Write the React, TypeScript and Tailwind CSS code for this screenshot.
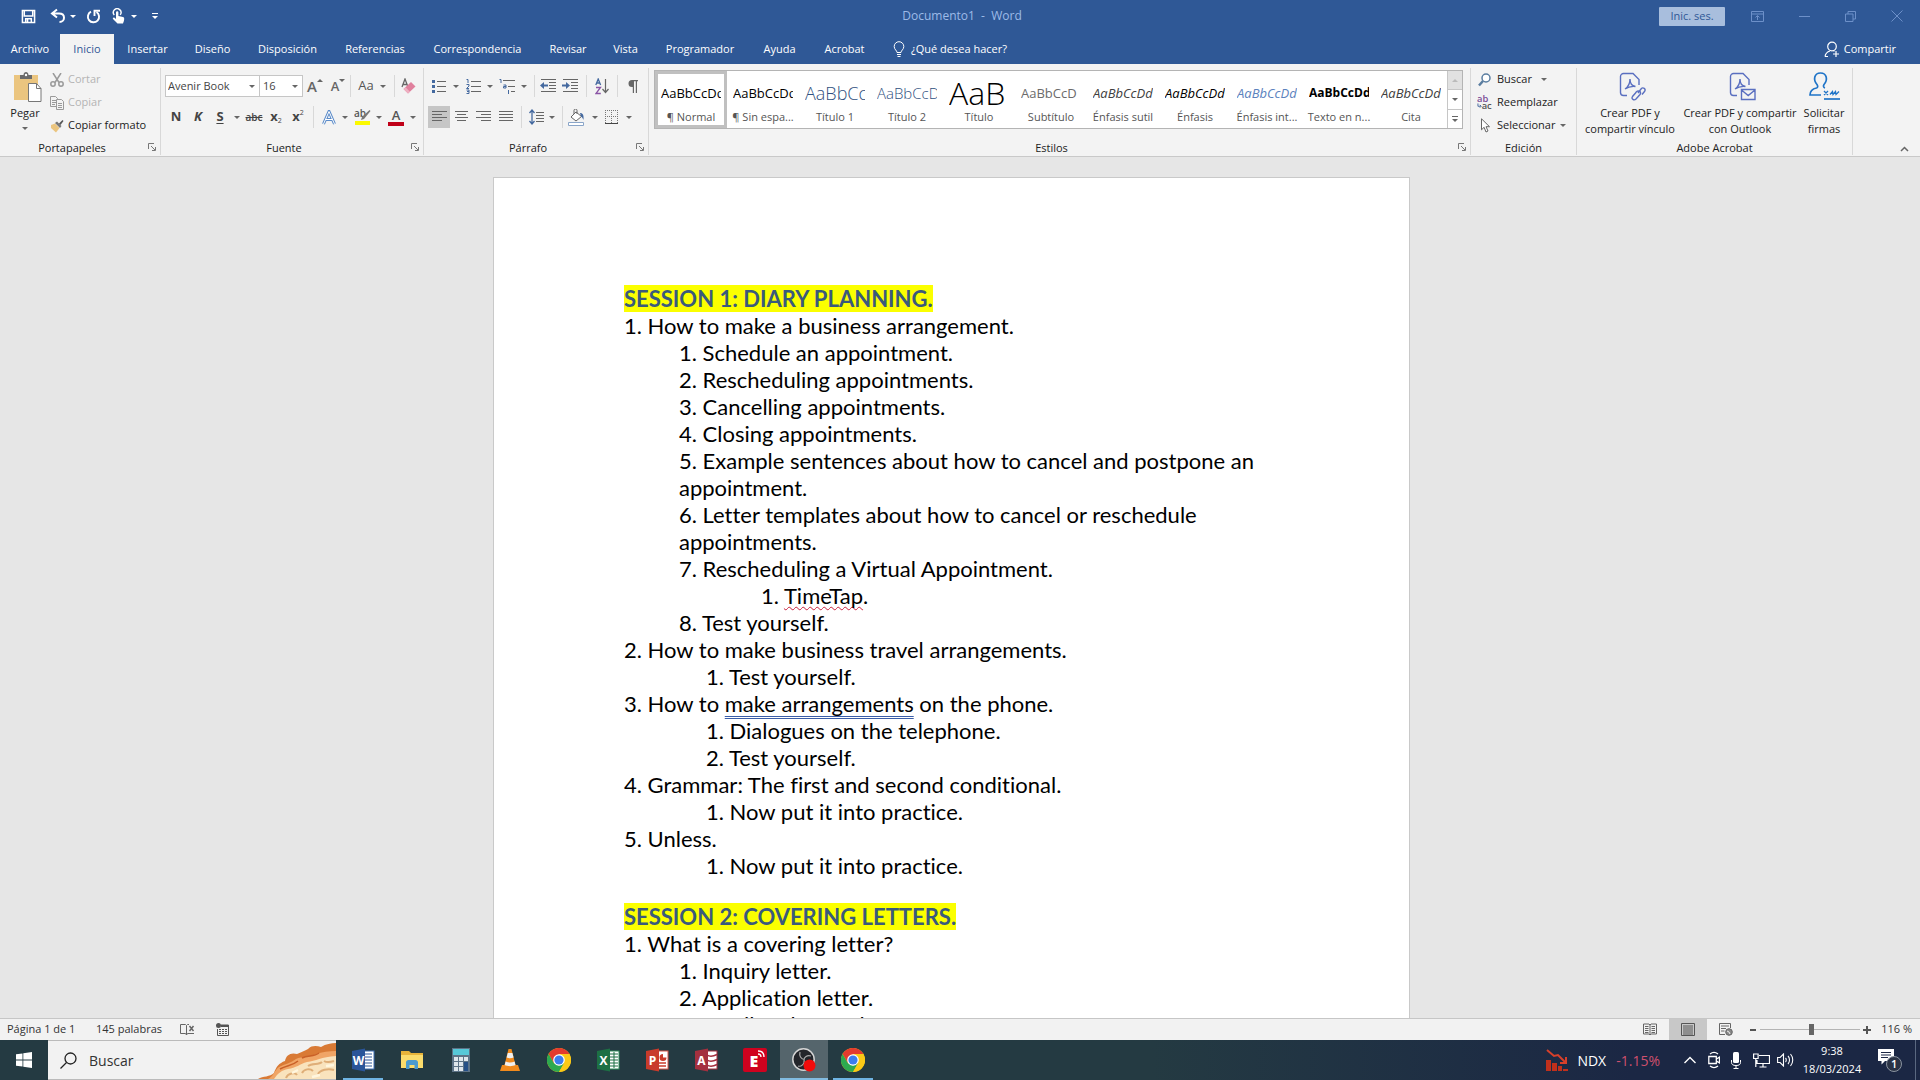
import { useState } from 'react'
import type { ReactNode } from 'react'

const tabs = [
  { label: 'Archivo', width: 'w-[60px]' },
  { label: 'Inicio', width: 'w-[54px]' },
  { label: 'Insertar', width: 'w-[67px]' },
  { label: 'Diseño', width: 'w-[63px]' },
  { label: 'Disposición', width: 'w-[87px]' },
  { label: 'Referencias', width: 'w-[88px]' },
  { label: 'Correspondencia', width: 'w-[117px]' },
  { label: 'Revisar', width: 'w-[64px]' },
  { label: 'Vista', width: 'w-[51px]' },
  { label: 'Programador', width: 'w-[98px]' },
  { label: 'Ayuda', width: 'w-[61px]' },
  { label: 'Acrobat', width: 'w-[69px]' },
]

const styles = [
  { name: '¶ Normal', sample: 'AaBbCcDd', look: 'text-[13px] text-black' },
  { name: '¶ Sin espa...', sample: 'AaBbCcDd', look: 'text-[13px] text-black' },
  { name: 'Título 1', sample: 'AaBbCc', look: 'text-[18px] font-light text-[#2f5080]' },
  { name: 'Título 2', sample: 'AaBbCcD', look: 'text-[15px] font-light text-[#2f5080]' },
  { name: 'Título', sample: 'AaB', look: 'text-[32px] font-light text-black' },
  { name: 'Subtítulo', sample: 'AaBbCcD', look: 'text-[13px] text-[#6b6b6b]' },
  { name: 'Énfasis sutil', sample: 'AaBbCcDd', look: 'text-[13px] italic text-[#404040]' },
  { name: 'Énfasis', sample: 'AaBbCcDd', look: 'text-[13px] italic text-black' },
  { name: 'Énfasis int...', sample: 'AaBbCcDd', look: 'text-[13px] italic text-[#5b82bd]' },
  { name: 'Texto en n...', sample: 'AaBbCcDd', look: 'text-[12px] font-bold text-black' },
  { name: 'Cita', sample: 'AaBbCcDd', look: 'text-[13px] italic text-[#404040]' },
]

const indents = ['pl-0', 'pl-[55px]', 'pl-[82px]', 'pl-[137px]']

const sessionOne: { level: number; text: ReactNode }[] = [
  { level: 0, text: '1. How to make a business arrangement.' },
  { level: 1, text: '1. Schedule an appointment.' },
  { level: 1, text: '2. Rescheduling appointments.' },
  { level: 1, text: '3. Cancelling appointments.' },
  { level: 1, text: '4. Closing appointments.' },
  { level: 1, text: '5. Example sentences about how to cancel and postpone an appointment.' },
  { level: 1, text: '6. Letter templates about how to cancel or reschedule appointments.' },
  { level: 1, text: '7. Rescheduling a Virtual Appointment.' },
  {
    level: 3,
    text: (
      <>
        1. <span className="underline decoration-[#c8203c] decoration-wavy decoration-1 underline-offset-2 [text-decoration-skip-ink:none]">TimeTap</span>.
      </>
    ),
  },
  { level: 1, text: '8. Test yourself.' },
  { level: 0, text: '2. How to make business travel arrangements.' },
  { level: 2, text: '1. Test yourself.' },
  {
    level: 0,
    text: (
      <>
        3. How to{' '}
        <span className="underline decoration-[#3a5da8] decoration-double decoration-1 underline-offset-4 [text-decoration-skip-ink:none]">
          make arrangements
        </span>{' '}
        on the phone.
      </>
    ),
  },
  { level: 2, text: '1. Dialogues on the telephone.' },
  { level: 2, text: '2. Test yourself.' },
  { level: 0, text: '4. Grammar: The first and second conditional.' },
  { level: 2, text: '1. Now put it into practice.' },
  { level: 0, text: '5. Unless.' },
  { level: 2, text: '1. Now put it into practice.' },
]

const sessionTwo: { level: number; text: ReactNode }[] = [
  { level: 0, text: '1. What is a covering letter?' },
  { level: 1, text: '1. Inquiry letter.' },
  { level: 1, text: '2. Application letter.' },
  { level: 1, text: '3. Email and cover letter.' },
]

function Arrow({ className = 'text-[#666]' }: { className?: string }) {
  return (
    <svg className={`h-[3px] w-[6px] shrink-0 ${className}`} viewBox="0 0 6 3" fill="currentColor">
      <path d="M0 0h6L3 3z" />
    </svg>
  )
}

function Sep({ className = '' }: { className?: string }) {
  return <span className={`h-[22px] w-px shrink-0 bg-[#d8d8d8] ${className}`} />
}

function Tool({ label, width, active, children }: { label: string; width: string; active?: boolean; children: ReactNode }) {
  return (
    <button
      type="button"
      aria-label={label}
      className={`flex h-[22px] shrink-0 items-center justify-center ${width} ${active ? 'bg-[#c6c6c6]' : 'hover:bg-[#dcdcdc]'}`}
    >
      {children}
    </button>
  )
}

function Drop({ label }: { label: string }) {
  return (
    <button type="button" aria-label={label} className="flex h-[22px] w-3 shrink-0 items-center justify-center">
      <Arrow />
    </button>
  )
}

function Group({ title, className, launcher, children }: { title: string; className: string; launcher?: boolean; children: ReactNode }) {
  return (
    <section className={`relative flex flex-col border-r border-[#d8d8d8] ${className}`}>
      <div className="flex-1">{children}</div>
      <h2 className={`text-center text-[11px] leading-[15px] text-[#222] ${launcher ? 'pr-4' : ''}`}>{title}</h2>
      {launcher && (
        <button type="button" aria-label={`Más opciones de ${title}`} className="absolute right-1 bottom-1 text-[#777]">
          <svg width="8" height="8" viewBox="0 0 8 8" fill="none" stroke="currentColor">
            <path d="M.5 6V.5H6M3 3l4 4M7.500 4v3.500H4" />
          </svg>
        </button>
      )}
    </section>
  )
}

// horizontal strokes shared by the alignment icons
function Lines({ rows }: { rows: [number, number][] }) {
  return (
    <svg className="text-[#666]" width="15" height="14" viewBox="0 0 15 14" fill="currentColor">
      {rows.map(([x, w], i) => (
        <rect key={i} x={x} y={i * 3 + 1} width={w} height="1" />
      ))}
    </svg>
  )
}

function TitleBar() {
  return (
    <header className="flex h-[34px] items-center bg-[#2f5896] pb-[2px] text-white">
      <div className="flex flex-1 items-center pl-[21px]">
        <button type="button" aria-label="Guardar" className="mr-[14px]">
          <svg width="15" height="15" viewBox="0 0 16 16" fill="none" stroke="currentColor" strokeWidth="1.600">
            <path d="M1.500 1.500h13v13h-13zM3.500 2v5.500h9V2" />
            <path d="M5 14.500v-4h6v4M7 11v3" />
          </svg>
        </button>
        <button type="button" aria-label="Deshacer" className="mr-[4px]">
          <svg width="16" height="16" viewBox="0 0 16 16" fill="none" stroke="currentColor" strokeWidth="2">
            <path d="M7 1.500L2 5.500l5 4M2.500 5.500H9c3.500 0 5 2 5 4.200S12.500 14 9.500 14" />
          </svg>
        </button>
        <Arrow className="mr-[10px] text-white" />
        <button type="button" aria-label="Rehacer" className="mr-[11px]">
          <svg width="15" height="15" viewBox="0 0 15 15" fill="none" stroke="currentColor" strokeWidth="1.900">
            <path d="M5 2.700a5.600 5.600 0 1 0 5.500.3" />
            <path d="M8.500 7V1.700H14" />
          </svg>
        </button>
        <button type="button" aria-label="Modo mouse/toque" className="mr-[6px]">
          <svg width="13" height="16" viewBox="0 0 13 16" fill="currentColor">
            <path d="M4 4.500a1.200 1.200 0 0 1 2.400 0V8l4.600 1c.8.2 1.200.7 1.200 1.500 0 2-.6 3.500-1.200 5H5.500L1 11c-.6-.9.5-1.900 1.500-1.200L4 11z" />
            <path d="M2.300 7A3.800 3.800 0 1 1 8.200 6.800" fill="none" stroke="currentColor" strokeWidth="1.400" />
          </svg>
        </button>
        <Arrow className="mr-[15px] text-white" />
        <button type="button" aria-label="Personalizar barra" className="flex flex-col items-center gap-[2px]">
          <span className="h-px w-[6px] bg-white" />
          <Arrow className="text-white" />
        </button>
      </div>
      <h1 className="text-[12px] whitespace-pre text-[#9dbbe8]">Documento1  -  Word</h1>
      <div className="flex flex-1 items-center justify-end pr-[17px] text-[#6d90c9]">
        <button type="button" className="mr-[26px] h-[19px] w-[66px] rounded-[1px] bg-[#a8bedd] text-[11px] text-[#2f5896]">
          Inic. ses.
        </button>
        <button type="button" aria-label="Opciones de la cinta" className="mr-[35px]">
          <svg width="13" height="11" viewBox="0 0 13 11" fill="none" stroke="currentColor">
            <path d="M.5.5h12v10H.5zM.5 3h12M6.500 9V5M4.500 6.500l2-2 2 2" />
          </svg>
        </button>
        <button type="button" aria-label="Minimizar" className="mr-[35px]">
          <svg width="11" height="11" viewBox="0 0 11 11" stroke="currentColor"><path d="M0 5.500h11" /></svg>
        </button>
        <button type="button" aria-label="Restaurar" className="mr-[35px]">
          <svg width="11" height="11" viewBox="0 0 11 11" fill="none" stroke="currentColor">
            <path d="M.5 3h7.500v7.500H.5zM3 3V.5h7.500V8H8" />
          </svg>
        </button>
        <button type="button" aria-label="Cerrar">
          <svg width="12" height="12" viewBox="0 0 12 12" stroke="currentColor"><path d="M.5.5l11 11M11.500.5l-11 11" /></svg>
        </button>
      </div>
    </header>
  )
}

function TabBar({ current, onSelect }: { current: string; onSelect: (tab: string) => void }) {
  return (
    <nav className="flex h-[30px] items-center bg-[#2f5896] text-[11px] text-white">
      {tabs.map((tab) => (
        <button
          key={tab.label}
          type="button"
          onClick={() => onSelect(tab.label)}
          className={`h-[30px] shrink-0 whitespace-nowrap ${tab.width} ${tab.label === current ? 'bg-[#f3f3f3] text-[#2f5896]' : ''}`}
        >
          {tab.label}
        </button>
      ))}
      <button type="button" className="ml-[14px] flex items-center gap-[6px] whitespace-nowrap">
        <svg width="12" height="17" viewBox="0 0 12 17" fill="none" stroke="currentColor">
          <path d="M4 11.500c0-2-2.800-3-2.800-6a4.800 4.800 0 0 1 9.600 0c0 3-2.800 4-2.800 6zM4 13.500h4M4.500 15.500h3" />
        </svg>
        ¿Qué desea hacer?
      </button>
      <button type="button" className="mr-6 ml-auto flex items-center gap-1">
        <svg width="16" height="17" viewBox="0 0 16 17" fill="none" stroke="currentColor" strokeWidth="1.200">
          <circle cx="8" cy="5.500" r="4.300" />
          <path d="M1 15.500c.5-3 2.500-4.800 5-5.500M1 15.500h3M9.500 9.700l1 .6M12 10v6M9 13h6" />
        </svg>
        Compartir
      </button>
    </nav>
  )
}

function Clipboard() {
  return (
    <Group title="Portapapeles" className="w-[161px]" launcher>
      <div className="flex">
        <button type="button" className="flex w-[50px] flex-col items-center pt-1 text-[11px] leading-4 text-[#222]">
          <svg className="ml-1" width="29" height="31" viewBox="0 0 29 31">
            <path d="M1 3h24v25H1z" fill="#ebc57f" />
            <path d="M7 3h3.500c0-4 5-4 5 0H19v4H7z" fill="#6b6b6b" />
            <circle cx="13" cy="3" r="1.200" fill="#fff" />
            <path d="M15.500 11.500h8l4.500 5v13H15.500z" fill="#fff" stroke="#777" />
            <path d="M23.500 11.500v5h4.500" fill="none" stroke="#777" />
          </svg>
          <span className="mt-[2px]">Pegar</span>
          <Arrow className="mt-[6px] text-[#666]" />
        </button>
        <div className="flex flex-col text-[11px] text-[#222]">
          <button type="button" disabled className="flex h-[23px] items-center gap-1 text-[#b4b4b4]">
            <svg width="14" height="14" viewBox="0 0 14 14" fill="none" stroke="#9a9a9a" strokeWidth="1.500">
              <path d="M3 0l6 9.500M11 0L5 9.500" />
              <circle cx="3" cy="11" r="2.200" />
              <circle cx="11" cy="11" r="2.200" />
            </svg>
            Cortar
          </button>
          <button type="button" disabled className="flex h-[23px] items-center gap-1 text-[#b4b4b4]">
            <svg width="14" height="14" viewBox="0 0 14 14" fill="#f3f3f3" stroke="#9a9a9a">
              <path d="M.5.5h5l2 2v8h-7zM2 4.500h4M2 6.500h4M2 8.500h3" />
              <path d="M6.500 3.500h5l2 2v8h-7zM8 7.500h4M8 9.500h4M8 11.500h4" />
            </svg>
            Copiar
          </button>
          <button type="button" className="flex h-[23px] items-center gap-1 whitespace-nowrap">
            <svg width="14" height="14" viewBox="0 0 14 14">
              <path d="M1 6l4-1.500L9.500 9 6 13.500 1 9z" fill="#ebc57f" />
              <path d="M5 4l2-1.500 4.500 4.500L10 9z" fill="#777" />
              <path d="M9 4.500L12.500 1l1 1L10.500 6z" fill="#555" />
            </svg>
            Copiar formato
          </button>
        </div>
      </div>
    </Group>
  )
}

function FontGroup() {
  return (
    <Group title="Fuente" className="w-[263px]" launcher>
      <div className="flex flex-col gap-[9px] pt-[7px] pl-1">
        <div className="flex h-[22px] items-center">
          <div className="relative flex">
            <select aria-label="Fuente" className="h-[22px] w-[95px] appearance-none border border-[#c6c6c6] bg-white pl-[2px] text-[11px] text-[#444]">
              <option>Avenir Book</option>
            </select>
            <Arrow className="pointer-events-none absolute top-[10px] right-[5px] text-[#666]" />
          </div>
          <div className="relative flex">
            <select aria-label="Tamaño de fuente" className="h-[22px] w-[43px] appearance-none border border-l-0 border-[#c6c6c6] bg-white pl-[3px] text-[11px] text-[#444]">
              <option>16</option>
            </select>
            <Arrow className="pointer-events-none absolute top-[10px] right-[5px] text-[#666]" />
          </div>
          <Tool label="Aumentar tamaño" width="w-6">
            <span className="text-[15px] leading-4 font-semibold text-[#666]">A</span>
            <Arrow className="mb-3 rotate-180 text-[#666]" />
          </Tool>
          <Tool label="Reducir tamaño" width="w-[22px]">
            <span className="text-[13px] leading-4 font-semibold text-[#666]">A</span>
            <Arrow className="mb-3 text-[#666]" />
          </Tool>
          <Sep className="mr-1 ml-px" />
          <Tool label="Mayúsculas y minúsculas" width="w-[22px]">
            <span className="text-[13px] text-[#555]">Aa</span>
          </Tool>
          <Drop label="Opciones de mayúsculas" />
          <Sep className="mr-px ml-[5px]" />
          <Tool label="Borrar formato" width="w-6">
            <svg width="15" height="17" viewBox="0 0 15 17">
              <path d="M1 9l3-8 3 8M2 6.500h4" fill="none" stroke="#666" strokeWidth="1.300" />
              <path d="M2.500 11L10 4l4.500 4.500L7 15.500z" fill="#e0809d" />
              <path d="M2.500 11l2-1.800 4.500 4.500-2 1.800z" fill="#eeb0c2" />
            </svg>
          </Tool>
        </div>
        <div className="flex items-center text-[#444]">
          <Tool label="Negrita" width="w-[22px]"><span className="text-[13px] font-bold">N</span></Tool>
          <Tool label="Cursiva" width="w-[22px]"><span className="text-[13px] font-bold italic">K</span></Tool>
          <Tool label="Subrayado" width="w-[22px]"><span className="text-[13px] font-bold underline underline-offset-2">S</span></Tool>
          <Drop label="Tipo de subrayado" />
          <Tool label="Tachado" width="w-[22px]"><span className="text-[10px] font-semibold line-through">abc</span></Tool>
          <Tool label="Subíndice" width="w-[22px]">
            <span className="text-[13px] font-bold">x</span>
            <span className="mt-2 text-[7px]">2</span>
          </Tool>
          <Tool label="Superíndice" width="w-[22px]">
            <span className="text-[13px] font-bold">x</span>
            <span className="mb-2 text-[7px]">2</span>
          </Tool>
          <Sep className="mx-1" />
          <Tool label="Efectos de texto" width="w-[21px]">
            <svg width="14" height="15" viewBox="0 0 14 15" fill="none">
              <path d="M1.500 14L7 1.500 12.500 14M3.500 9.500h7" stroke="#5b8bc9" strokeWidth="3" />
              <path d="M1.500 14L7 1.500 12.500 14M3.500 9.500h7" stroke="#fff" strokeWidth="1" />
            </svg>
          </Tool>
          <Drop label="Opciones de efectos" />
          <Tool label="Resaltado" width="w-[22px]">
            <svg width="17" height="18" viewBox="0 0 17 18">
              <text x="0" y="9" fontSize="10" fontWeight="600" fill="#555" fontFamily="Open Sans, sans-serif">ab</text>
              <path d="M15.500 2l1 1L10 11l-3 1 1-3z" fill="#777" />
              <rect x="1" y="13" width="15" height="4" fill="#fbf900" />
            </svg>
          </Tool>
          <Drop label="Color de resaltado" />
          <Tool label="Color de fuente" width="w-[22px]">
            <span className="flex w-4 flex-col items-center border-b-4 border-[#c00018] text-[13px] leading-[13px] font-semibold text-[#555]">A</span>
          </Tool>
          <Drop label="Opciones de color" />
        </div>
      </div>
    </Group>
  )
}

function ParagraphGroup() {
  return (
    <Group title="Párrafo" className="w-[225px]" launcher>
      <div className="flex flex-col gap-[9px] pt-[7px] pl-1">
        <div className="flex items-center">
          <Tool label="Viñetas" width="w-[22px]">
            <svg width="14" height="15" viewBox="0 0 14 15" fill="#666">
              <path d="M5 2h9v1H5zM5 7h9v1H5zM5 12h9v1H5z" />
              <path d="M0 1h3v3H0zM0 6h3v3H0zM0 11h3v3H0z" fill="#44699f" />
            </svg>
          </Tool>
          <Drop label="Biblioteca de viñetas" />
          <Tool label="Numeración" width="w-[22px]">
            <svg width="15" height="17" viewBox="0 0 15 17" fill="#666">
              <path d="M5 3h10v1H5zM5 8h10v1H5zM5 13h10v1H5z" />
              <path d="M.5 1.500H2V5M.5 6.500H3v1.500L.5 10.500H3M.5 12H3v3.500H.5M1 13.500h2" fill="none" stroke="#44699f" />
            </svg>
          </Tool>
          <Drop label="Biblioteca de numeración" />
          <Tool label="Lista multinivel" width="w-[22px]">
            <svg width="16" height="17" viewBox="0 0 16 17" fill="#666">
              <path d="M4 2h12v1H4zM9 8h7v1H9zM12 13h4v1h-4z" />
              <path d="M.5 1.500H2V5M4.500 7H7v3H4.500V8.500H7M9.500 12v4" fill="none" stroke="#44699f" />
            </svg>
          </Tool>
          <Drop label="Niveles de lista" />
          <Sep className="mr-[2px] ml-1" />
          <Tool label="Disminuir sangría" width="w-[22px]">
            <svg width="16" height="14" viewBox="0 0 16 14" fill="#666">
              <path d="M1 0h15v1H1zM9 3h7v1H9zM9 6h7v1H9zM9 9h7v1H9zM1 12h15v1H1z" />
              <path d="M4 3L0 6.500 4 10V7.500h4v-2H4z" fill="#44699f" />
            </svg>
          </Tool>
          <Tool label="Aumentar sangría" width="w-[22px]">
            <svg width="16" height="14" viewBox="0 0 16 14" fill="#666">
              <path d="M1 0h15v1H1zM9 3h7v1H9zM9 6h7v1H9zM9 9h7v1H9zM1 12h15v1H1z" />
              <path d="M4 3l4 3.500L4 10V7.500H0v-2h4z" fill="#44699f" />
            </svg>
          </Tool>
          <Sep className="mr-1 ml-[5px]" />
          <Tool label="Ordenar" width="w-[22px]">
            <svg width="14" height="17" viewBox="0 0 14 17" fill="none">
              <path d="M.8 7l2.400-6 2.400 6M1.500 5h3.500" stroke="#44699f" strokeWidth="1.300" />
              <path d="M1 9.500h4.500L1 15.500h4.800" stroke="#8a55a5" strokeWidth="1.300" />
              <path d="M10.500 1v13M7.500 11l3 3.500 3-3.500" stroke="#666" strokeWidth="1.200" />
            </svg>
          </Tool>
          <Sep className="mx-1" />
          <Tool label="Mostrar todo" width="w-[22px]">
            <svg width="10" height="13" viewBox="0 0 10 13" fill="#666">
              <path d="M4 0h6v1.200H9V13H7.800V1.200H6V13H4.800V7H4a3.500 3.500 0 0 1 0-7z" />
            </svg>
          </Tool>
        </div>
        <div className="flex items-center">
          <Tool label="Alinear a la izquierda" width="w-[22px]" active><Lines rows={[[0, 15], [0, 10], [0, 15], [0, 10]]} /></Tool>
          <Tool label="Centrar" width="w-[22px]"><Lines rows={[[1, 13], [3, 9], [1, 13], [3, 9]]} /></Tool>
          <Tool label="Alinear a la derecha" width="w-[22px]"><Lines rows={[[0, 15], [5, 10], [0, 15], [5, 10]]} /></Tool>
          <Tool label="Justificar" width="w-[22px]"><Lines rows={[[1, 14], [1, 14], [1, 14], [1, 14]]} /></Tool>
          <Sep className="mr-1 ml-[5px]" />
          <Tool label="Interlineado" width="w-[20px]">
            <svg width="15" height="16" viewBox="0 0 15 16" fill="#666">
              <path d="M7 3h8v1H7zM7 6h8v1H7zM7 9h8v1H7zM7 12h8v1H7z" />
              <path d="M3 1v14M.5 4L3 1l2.500 3M.5 12L3 15l2.500-3" fill="none" stroke="#44699f" strokeWidth="1.300" />
            </svg>
          </Tool>
          <Drop label="Opciones de interlineado" />
          <Sep className="ml-1" />
          <Tool label="Sombreado" width="w-[26px]">
            <svg width="17" height="17" viewBox="0 0 17 17" fill="none">
              <path d="M3 8l5-5 5.500 4.500L8 12z" fill="#fff" stroke="#666" />
              <path d="M6 5V1.500a1.500 1.500 0 0 1 3 0V5" stroke="#666" />
              <path d="M12 4c3 0 4 2.500 3.500 7-.8-2-1.500-3-2.500-3.500z" fill="#44699f" />
              <path d="M.5 13.500h15v3H.5z" fill="#fff" stroke="#8aa5c8" />
            </svg>
          </Tool>
          <Drop label="Color de sombreado" />
          <Tool label="Bordes" width="w-[22px]">
            <svg width="14" height="14" viewBox="0 0 14 14" fill="none" stroke="#777">
              <path d="M.5 0v13M6.500 0v13M12.500 0v13M0 .5h13M0 6.500h13" strokeDasharray="1 1" />
              <path d="M0 13.500h13" stroke="#444" />
            </svg>
          </Tool>
          <Drop label="Opciones de bordes" />
        </div>
      </div>
    </Group>
  )
}

function StylesGroup() {
  const [selected, setSelected] = useState(0)
  return (
    <Group title="Estilos" className="min-w-0 flex-1" launcher>
      <div className="mt-[2px] mr-[7px] ml-[5px] flex h-[59px] border border-[#b4b4b4] bg-white">
        <div className="flex min-w-0 flex-1 overflow-hidden">
          {styles.map((style, i) => (
            <button
              key={style.name}
              type="button"
              onClick={() => setSelected(i)}
              className={`flex h-[57px] w-[72px] shrink-0 flex-col items-center border-[3px] ${i === selected ? 'border-[#c0c0c0]' : 'border-transparent'}`}
            >
              <span className={`flex h-[35px] w-[60px] items-end overflow-hidden pb-[6px] leading-5 whitespace-nowrap ${style.look}`}>{style.sample}</span>
              <span className="text-[11px] leading-4 whitespace-nowrap text-[#555]">{style.name}</span>
            </button>
          ))}
        </div>
        <div className="flex w-[15px] flex-col divide-y divide-[#c6c6c6] border-l border-[#c6c6c6]">
          <button type="button" aria-label="Fila anterior" className="flex flex-1 items-center justify-center bg-[#e1e1e1]"><Arrow className="rotate-180 text-[#bbb]" /></button>
          <button type="button" aria-label="Fila siguiente" className="flex flex-1 items-center justify-center"><Arrow /></button>
          <button type="button" aria-label="Más estilos" className="flex flex-1 flex-col items-center justify-center gap-[2px]">
            <span className="h-px w-[6px] bg-[#666]" />
            <Arrow />
          </button>
        </div>
      </div>
    </Group>
  )
}

function EditGroup() {
  return (
    <Group title="Edición" className="w-[106px]">
      <div className="flex flex-col pl-[6px] text-[11px] text-[#222]">
        <button type="button" className="flex h-[23px] items-center gap-[5px]">
          <svg width="15" height="14" viewBox="0 0 15 14" fill="none">
            <circle cx="9" cy="5" r="4" fill="#fff" stroke="#5a7da0" strokeWidth="1.500" />
            <path d="M6 8l-4 4.500" stroke="#5a7da0" strokeWidth="2.500" />
          </svg>
          Buscar
          <Arrow className="ml-1 text-[#666]" />
        </button>
        <button type="button" className="flex h-[23px] items-center gap-[5px]">
          <svg width="15" height="15" viewBox="0 0 16 16" fontFamily="Open Sans, sans-serif" fontSize="10" fontWeight="600">
            <text x="0" y="7" fill="#7a4b96">ab</text>
            <text x="5" y="15" fill="#555">ac</text>
            <path d="M1 9v3h3M3 10.500L4.500 12 3 13.500" fill="none" stroke="#44699f" />
          </svg>
          Reemplazar
        </button>
        <button type="button" className="flex h-[23px] items-center gap-[5px]">
          <svg width="15" height="15" viewBox="0 0 15 15" fill="#fff" stroke="#666">
            <path d="M4.500.8v11l2.600-2.500L9 14l2-1-2-4.300h3.500z" />
          </svg>
          Seleccionar
          <Arrow className="text-[#666]" />
        </button>
      </div>
    </Group>
  )
}

function PdfPage() {
  return (
    <>
      <path d="M8 23.500H4.500a3 3 0 0 1-3-3V4.500a3 3 0 0 1 3-3H14l6 6V13" />
      <path d="M6 17c3-2 5-6 5-10 0 5 2 7 5.500 7.500C13 14 9 15 6 17z" />
    </>
  )
}

function AcrobatGroup() {
  return (
    <Group title="Adobe Acrobat" className="w-[276px]">
      <div className="flex pt-1 text-[11px] leading-4 text-[#222]">
        <button type="button" className="flex w-[106px] flex-col items-center whitespace-nowrap">
          <svg className="ml-1" width="27" height="29" viewBox="0 0 27 29" fill="none" stroke="#5a6fc0" strokeWidth="1.400">
            <PdfPage />
            <path d="M19 21l3-4c2-2.500 5.500 0 3.500 2.500L23 22.500M21 19.500c-2-1.500-3.500 0-4.500 1.500l-3 3.500c-1.500 2.500 1.500 4.500 3.500 2.500l4-4.500c1-1.500.5-2.300 0-3z" />
          </svg>
          <span className="mt-1">Crear PDF y</span>
          <span>compartir vínculo</span>
        </button>
        <button type="button" className="flex w-[114px] flex-col items-center whitespace-nowrap">
          <svg className="ml-1" width="27" height="29" viewBox="0 0 27 29" fill="none" stroke="#5a6fc0" strokeWidth="1.400">
            <PdfPage />
            <path d="M12.500 17.500h13.500v10H12.500zM12.500 18l6.700 5.500L26 18" />
          </svg>
          <span className="mt-1">Crear PDF y compartir</span>
          <span>con Outlook</span>
        </button>
        <button type="button" className="flex w-[54px] flex-col items-center">
          <svg width="31" height="29" viewBox="0 0 31 29" fill="none" stroke="#1f74c8" strokeWidth="1.700">
            <path d="M12 23H1c0-4 2-6 6.500-7 1.500-.5 1.500-2 .5-3.500C4 8 5 1 11.500 1S19 8 15 12.500c-1 1.500-.5 3 1 3.500" />
            <path d="M15 19l4 4M19 19l-4 4M21 22.500l2.500-3 .5 3 2.500-3 .5 3 3-3" strokeWidth="1.300" />
            <path d="M15 27h16" />
          </svg>
          <span className="mt-1">Solicitar</span>
          <span>firmas</span>
        </button>
      </div>
    </Group>
  )
}

function Line({ level, children }: { level: number; children: ReactNode }) {
  return <li className={indents[level]}>{children}</li>
}

function Page() {
  return (
    <main className="flex min-h-0 flex-1 items-start justify-center overflow-hidden bg-[#e6e6e6] pt-[20px] pr-[17px]">
      <article className="w-[917px] shrink-0 border border-[#c9c9c9] bg-white pt-[107px] pr-[128px] pb-[108px] pl-[130px] font-['Lato','Open_Sans',sans-serif] text-[22px] leading-[27px] text-black [font-variant-ligatures:none]">
        <h2 className="font-bold text-[#3a5a7c]"><mark className="bg-[#fbff00] text-inherit">SESSION 1: DIARY PLANNING.</mark></h2>
        <ol>
          {sessionOne.map((line, i) => (
            <Line key={i} level={line.level}>{line.text}</Line>
          ))}
        </ol>
        <h2 className="mt-6 font-bold text-[#3a5a7c]"><mark className="bg-[#fbff00] text-inherit">SESSION 2: COVERING LETTERS.</mark></h2>
        <ol>
          {sessionTwo.map((line, i) => (
            <Line key={i} level={line.level}>{line.text}</Line>
          ))}
        </ol>
      </article>
    </main>
  )
}

function StatusBar() {
  const [zoom, setZoom] = useState(116)
  return (
    <footer className="flex h-[22px] shrink-0 items-center border-t border-[#c6c6c6] bg-[#f2f2f2] text-[11px] text-[#333]">
      <button type="button" className="ml-[7px] w-[89px] text-left">Página 1 de 1</button>
      <button type="button" className="w-[84px] text-left">145 palabras</button>
      <button type="button" aria-label="Revisión" className="mr-[21px]">
        <svg width="15" height="13" viewBox="0 0 15 13" fill="none" stroke="#666">
          <path d="M9 1.500H7.500l-1 1-1-1h-5v9h5l1 1.500 1-1.500H14M6.500 2.500V12" />
          <path d="M9.500 3l4 5M13.500 3l-4 5" strokeWidth="1.500" />
        </svg>
      </button>
      <button type="button" aria-label="Grabar macro">
        <svg width="13" height="13" viewBox="0 0 13 13" fill="none" stroke="#555">
          <path d="M5 2h7.500v10.500H1.500V6" />
          <path d="M5 3h7" strokeWidth="2" />
          <path d="M3 6.500h8M3 8.500h8M3 10.500h8" strokeDasharray="2 1" />
          <circle cx="2.500" cy="2.500" r="2.500" fill="#555" stroke="none" />
        </svg>
      </button>
      <div className="ml-auto flex h-full items-center">
        <button type="button" aria-label="Modo de lectura" className="mr-[12px]">
          <svg width="14" height="13" viewBox="0 0 14 13" fill="none" stroke="#666">
            <path d="M.5 1h5.500l1 1 1-1h5.500v10H8l-1 1-1-1H.5zM7 2v10M2 3.500h3.500M2 5.500h3.500M2 7.500h3.500M2 9.500h3.500M8.500 3.500H12M8.500 5.500H12M8.500 7.500H12M8.500 9.500H12" />
          </svg>
        </button>
        <button type="button" aria-label="Diseño de impresión" className="flex h-full w-[38px] items-center justify-center bg-[#c8c8c8]">
          <svg width="14" height="13" viewBox="0 0 14 13" fill="none" stroke="#555">
            <path d="M.5.5h13v12H.5zM2 3h10M2 5h10M2 7h10M2 9h10M2 11h10" />
          </svg>
        </button>
        <button type="button" aria-label="Diseño web" className="mr-2 ml-[12px]">
          <svg width="14" height="13" viewBox="0 0 14 13" fill="none" stroke="#666">
            <path d="M6 11.500H.5V.5h11V5M2 3h8M2 5.500h5M2 8h3.500" />
            <circle cx="10" cy="9" r="3.300" fill="#888" />
            <path d="M8 8l2 1 1 2" stroke="#eee" />
          </svg>
        </button>
        <button type="button" aria-label="Alejar" className="mr-[4px] ml-[9px] h-[2px] w-[6px] bg-[#555]" />
        <input
          type="range"
          aria-label="Zoom"
          min={10}
          max={214}
          value={zoom}
          onChange={(e) => setZoom(Number(e.target.value))}
          className="h-[11px] w-[100px] appearance-none bg-[linear-gradient(#b4b4b4,#b4b4b4)] bg-[length:100%_1px] bg-center bg-no-repeat [&::-webkit-slider-thumb]:h-[11px] [&::-webkit-slider-thumb]:w-[5px] [&::-webkit-slider-thumb]:appearance-none [&::-webkit-slider-thumb]:bg-[#666]"
        />
        <button type="button" aria-label="Acercar" className="ml-[3px]">
          <svg width="8" height="8" viewBox="0 0 8 8" fill="#555"><path d="M3 0h2v3h3v2H5v3H3V5H0V3h3z" /></svg>
        </button>
        <button type="button" className="w-[49px] pr-2 text-right whitespace-nowrap">{zoom} %</button>
      </div>
    </footer>
  )
}

function OfficeIcon({ letter, dark, light, children }: { letter: string; dark: string; light: string; children: ReactNode }) {
  return (
    <svg width="24" height="24" viewBox="0 0 24 24">
      <rect x="12" y="3" width="11" height="18" fill="#fff" stroke={light} />
      {children}
      <path d="M1 3l13-2.500v23L1 21z" fill={dark} />
      <text x="7.500" y="16.500" textAnchor="middle" fontSize="12" fontWeight="700" fill="#fff" fontFamily="Open Sans, sans-serif">{letter}</text>
    </svg>
  )
}

function Chrome() {
  return (
    <svg width="24" height="24" viewBox="0 0 24 24">
      <circle cx="12" cy="12" r="12" fill="#fbc916" />
      <path d="M12 6h10.400A12 12 0 0 0 1.600 6L6.800 15z" fill="#e33b2e" />
      <path d="M1.600 6A12 12 0 0 0 12 24l5.200-9L12 17.500 6.800 15z" fill="#2da94f" />
      <path d="M12 6h10.400A12 12 0 0 1 12 24l5.200-9z" fill="#fbc916" />
      <circle cx="12" cy="12" r="5.800" fill="#fff" />
      <circle cx="12" cy="12" r="4.600" fill="#3b7ded" />
    </svg>
  )
}

const apps: { name: string; state: string; icon: ReactNode }[] = [
  {
    name: 'Word',
    state: 'running',
    icon: <OfficeIcon letter="W" dark="#2a5599" light="#3f6fb5"><path d="M14 6h7M14 9h7M14 12h7M14 15h7M14 18h7" stroke="#2a5599" /></OfficeIcon>,
  },
  {
    name: 'Explorador',
    state: '',
    icon: (
      <svg width="24" height="22" viewBox="0 0 24 22">
        <path d="M1 2h8l2 2h12v15H1z" fill="#e8b43a" />
        <path d="M1 6h22v13H1z" fill="#fbdc6c" />
        <path d="M6 20v-6.500c0-1.500 1-2.500 2.500-2.500h7c1.500 0 2.500 1 2.500 2.500V20h-3.500v-4h-5v4z" fill="#4a9bd0" />
      </svg>
    ),
  },
  {
    name: 'Calculadora',
    state: '',
    icon: (
      <svg width="20" height="24" viewBox="0 0 20 24">
        <rect x="1" width="18" height="24" fill="#5d7387" />
        <rect x="2" y="1" width="16" height="6" fill="#57c8d8" />
        <path d="M3 9h4v4H3zM8 9h4v4H8zM13 9h4v4h-4zM3 14h4v4H3zM8 14h4v4H8zM3 19h4v4H3zM8 19h4v4H8z" fill="#dfe6ec" />
        <path d="M13 14h4v9h-4z" fill="#254f86" />
      </svg>
    ),
  },
  {
    name: 'VLC',
    state: '',
    icon: (
      <svg width="22" height="24" viewBox="0 0 22 24">
        <path d="M3 17h16l2 6H1z" fill="#f08a1d" />
        <path d="M9.500 1h3L17 19c-2 2-10 2-12 0z" fill="#f08a1d" />
        <path d="M8.800 5h4.600l1.200 4.500c-2 1-5 1-7 0zM6.600 13.500c3 1.300 6 1.300 9 0l.9 3.500c-3 1.500-8 1.500-10.800 0z" fill="#f0f0f0" />
      </svg>
    ),
  },
  { name: 'Chrome', state: '', icon: <Chrome /> },
  {
    name: 'Excel',
    state: '',
    icon: <OfficeIcon letter="X" dark="#1d7044" light="#2f8f5b"><path d="M14 6h8M14 9h8M14 12h8M14 15h8M14 18h8M18 4v16" stroke="#1d7044" /></OfficeIcon>,
  },
  {
    name: 'PowerPoint',
    state: '',
    icon: (
      <OfficeIcon letter="P" dark="#c93b2b" light="#d9594a">
        <path d="M14 15h7M14 18h7" stroke="#c93b2b" strokeWidth="1.500" />
        <path d="M18 6a3.500 3.500 0 1 0 3.500 3.500H18z" fill="#c93b2b" />
      </OfficeIcon>
    ),
  },
  {
    name: 'Access',
    state: '',
    icon: (
      <OfficeIcon letter="A" dark="#a4303f" light="#a4303f">
        <path d="M13 7c3 2 7 1 10-.5M13 12c3 2 7 1 10-.5M13 17c3 2 7 1 10-.5" stroke="#a4303f" strokeWidth="1.500" fill="none" />
      </OfficeIcon>
    ),
  },
  {
    name: 'E',
    state: '',
    icon: (
      <svg width="24" height="24" viewBox="0 0 24 24">
        <rect width="24" height="24" rx="2" fill="#d0021f" />
        <text x="11" y="19" textAnchor="middle" fontSize="16" fontWeight="800" fill="#fff" fontFamily="Open Sans, sans-serif">E</text>
        <path d="M15 6c2 0 3 1 3 3M15 3c4 0 6 2 6 6" stroke="#fff" strokeWidth="1.300" fill="none" />
      </svg>
    ),
  },
  {
    name: 'OBS',
    state: 'active',
    icon: (
      <svg width="24" height="24" viewBox="0 0 24 24">
        <circle cx="11.500" cy="11.500" r="10.700" fill="#23252a" stroke="#d5d5d5" strokeWidth="1.500" />
        <path d="M8 4c-1 4 1 7 4 7.500M19 8c-4-1-7 1-7 4M6 18c3 1 7-2 6-6" stroke="#a9a9a9" strokeWidth="1.200" fill="none" />
        <circle cx="17.500" cy="17.500" r="6" fill="#f10b0b" />
      </svg>
    ),
  },
  { name: 'Chrome 2', state: 'running', icon: <Chrome /> },
]

function Taskbar() {
  return (
    <div className="flex h-[40px] shrink-0 items-center bg-linear-to-r from-[#243a42] from-60% to-[#1b2744] to-85% text-white">
      <button type="button" aria-label="Inicio de Windows" className="flex h-full w-[48px] items-center justify-center">
        <svg width="16" height="16" viewBox="0 0 16 16" fill="#fff">
          <path d="M0 2.300l6.500-.9v6.200H0zM7.300 1.300L16 0v7.600H7.300zM0 8.400h6.500v6.200L0 13.700zM7.300 8.400H16V16l-8.700-1.300z" />
        </svg>
      </button>
      <label className="flex h-full w-[288px] shrink-0 items-center overflow-hidden border-y border-[#bbb] bg-[#f2f2f2] pl-3">
        <svg width="17" height="17" viewBox="0 0 17 17" fill="none" stroke="#222" strokeWidth="1.300">
          <circle cx="10.500" cy="6.500" r="5.500" />
          <path d="M6.500 10.500L.5 16.500" />
        </svg>
        <input type="text" aria-label="Buscar" placeholder="Buscar" className="ml-3 w-[167px] bg-transparent text-[14px] text-[#333] outline-none placeholder:text-[#333]" />
        <svg className="h-[38px] w-[80px] shrink-0 self-end" viewBox="0 0 80 38">
          <path d="M2 38c5-3 12-2 16-6 2-6 5-10 11-12 1-6 6-9 12-7 4-2 8-3 11-5 4-4 9-3 13-2 5-3 10-4 15-4v36z" fill="#d97a35" />
          <path d="M12 38c5-2 6-8 11-12 6-3 12-4 17-8 6-3 14-1 20-5 6-2 13-3 20-3v28z" fill="#f0a566" />
          <path d="M18 38c4-6 8-9 14-10 8-1 12-5 19-7 9-1 14-5 29-6v23z" fill="#f9e3bd" />
          <path d="M24 28c7-4 12-3 18-8M46 17c6-3 12-1 17-5" stroke="#c96027" strokeWidth="1.500" fill="none" />
          <path d="M30 37c2-5 9-6 11-3M46 32c2-4 8-5 11-2M52 25c4-3 11-1 14-4M62 33c2-4 10-6 16-4M68 20c3 2 7 1 10 0" stroke="#dfae78" strokeWidth="2" fill="none" />
          <path d="M36 32l6-3M56 36l8-2M70 25l8-1" stroke="#fff6de" strokeWidth="2.500" />
        </svg>
      </label>
      <div className="ml-[3px] flex h-full gap-px">
        {apps.map((app) => (
          <button
            key={app.name}
            type="button"
            aria-label={app.name}
            className={`flex h-full w-[48px] flex-col items-center ${app.state === 'active' ? 'bg-[#55656c]' : ''}`}
          >
            <span className="flex flex-1 items-center pt-[2px]">{app.icon}</span>
            <span className={`h-[2px] ${app.state === 'active' ? 'w-full bg-[#82bbe0]' : app.state === 'running' ? 'w-[40px] bg-[#6fb4e3]' : 'w-0'}`} />
          </button>
        ))}
      </div>
      <div className="ml-auto flex h-full items-center">
        <button type="button" className="mr-6 flex items-center text-[14px]">
          <svg className="mr-[9px]" width="22" height="22" viewBox="0 0 22 22">
            <path d="M0 11h5v11H0zM6 14h5v8H6zM12 17h4v5h-4zM17 20h5v2h-5z" fill="#c0301c" />
            <path d="M1 1l7 6 4-1 8 8M20 8v6h-6" stroke="#d8402a" strokeWidth="2" fill="none" />
          </svg>
          <span className="mr-[10px]">NDX</span>
          <span className="text-[#d0506e]">-1.15%</span>
        </button>
        <button type="button" aria-label="Iconos ocultos" className="mr-[12px]">
          <svg width="12" height="8" viewBox="0 0 12 8" fill="none" stroke="#fff" strokeWidth="1.400"><path d="M.5 7L6 1.500 11.500 7" /></svg>
        </button>
        <button type="button" aria-label="Reunirse ahora" className="mr-[11px]">
          <svg width="12" height="18" viewBox="0 0 12 18" fill="none" stroke="#fff" strokeWidth="1.300">
            <path d="M.8 5.500h7.500v7H.8zM8.500 8l3-2v6l-3-2M2 3c2.500-2 5.500-2 8 0M2 15c2.500 2 5.500 2 8 0" />
          </svg>
        </button>
        <button type="button" aria-label="Micrófono" className="mr-[12px]">
          <svg width="10" height="17" viewBox="0 0 10 17" fill="#fff">
            <rect x="2" width="6" height="11" rx="1.500" />
            <path d="M.5 8v2.500c0 2 1.500 3 4.500 3s4.500-1 4.500-3V8M5 13.500V16M2.500 16.500h5" fill="none" stroke="#fff" />
          </svg>
        </button>
        <button type="button" aria-label="Red" className="mr-[7px]">
          <svg width="17" height="15" viewBox="0 0 17 15" fill="none" stroke="#fff" strokeWidth="1.200">
            <path d="M6 2.500h10.500v8H4V7M10 10.500v3.500M6.500 14h7M.6 1h4.500v4.500H.6zM2.800 5.500V14" />
          </svg>
        </button>
        <button type="button" aria-label="Volumen" className="mr-[9px]">
          <svg width="17" height="14" viewBox="0 0 17 14" fill="none" stroke="#fff" strokeWidth="1.100">
            <path d="M.6 4.500h2.500L6.500 1v12L3.100 9.500H.6zM8.500 5c1 1 1 3 0 4M11 3c2 2 2 6 0 8M13.500 1c3 3.500 3 8.500 0 12" />
          </svg>
        </button>
        <time className="mr-[17px] flex w-[58px] flex-col items-center text-[11px] leading-[18px]">
          <span>9:38</span>
          <span>18/03/2024</span>
        </time>
        <button type="button" aria-label="Notificaciones" className="relative mr-[12px]">
          <svg width="25" height="26" viewBox="0 0 25 26">
            <path d="M0 2h16v12H7l-3.500 3.500V14H0z" fill="#fff" />
            <path d="M3 5.500h10M3 8h10M3 10.500h7" stroke="#1b2744" strokeWidth="1.200" />
            <circle cx="16" cy="17" r="7.500" fill="#2a3345" stroke="#8a93a0" />
          </svg>
          <span className="absolute top-[9px] left-[13px] text-[11px] leading-4 font-semibold">1</span>
        </button>
        <span className="mr-1 h-full w-px bg-[#5a6880]" />
      </div>
    </div>
  )
}

export default function App() {
  const [tab, setTab] = useState('Inicio')

  return (
    <div className="flex h-screen flex-col overflow-hidden bg-[#e6e6e6] font-['Open_Sans','Noto_Sans',sans-serif]">
      <TitleBar />
      <TabBar current={tab} onSelect={setTab} />
      {/* Ribbon */}
      <div className="flex h-[93px] shrink-0 border-b border-[#c9c9c9] bg-[#f3f3f3] pt-1 pb-px">
        <Clipboard />
        <FontGroup />
        <ParagraphGroup />
        <StylesGroup />
        <EditGroup />
        <AcrobatGroup />
        <div className="flex w-[67px] items-end justify-end pr-[11px] pb-[3px]">
          <button type="button" aria-label="Contraer la cinta">
            <svg width="9" height="6" viewBox="0 0 9 6" fill="none" stroke="#666" strokeWidth="1.500"><path d="M1 5l3.500-3.500L8 5" /></svg>
          </button>
        </div>
      </div>
      <Page />
      <StatusBar />
      <Taskbar />
    </div>
  )
}
